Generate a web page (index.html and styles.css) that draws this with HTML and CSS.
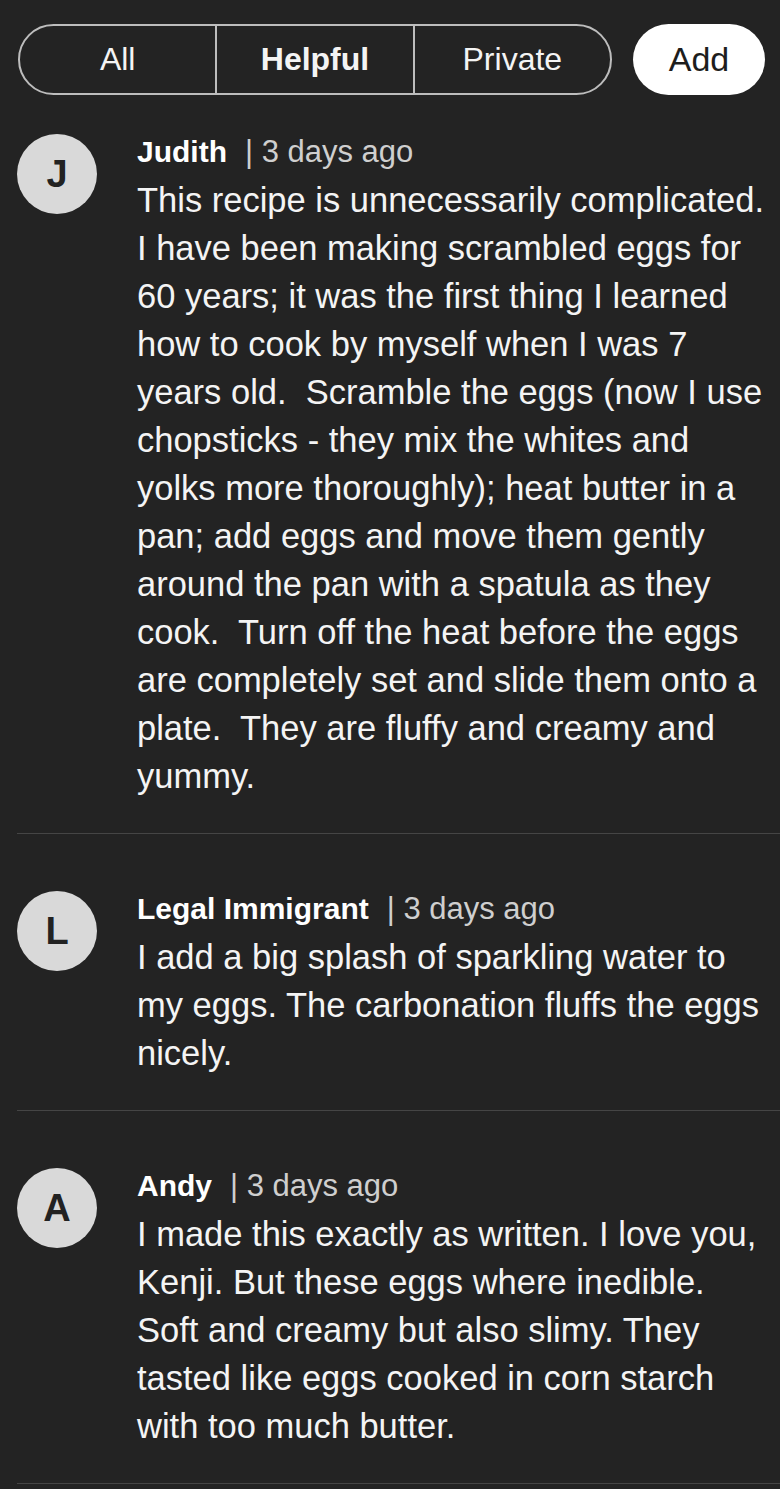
FILE: index.html
```html
<!DOCTYPE html>
<html lang="en">
<head>
<meta charset="utf-8">
<title>Comments</title>
<link rel="stylesheet" href="styles.css">
</head>
<body>
<div class="page">
  <div class="toolbar">
    <div class="segmented">
      <button class="seg">All</button>
      <button class="seg seg-active">Helpful</button>
      <button class="seg">Private</button>
    </div>
    <button class="add">Add</button>
  </div>

  <div class="comment">
    <div class="avatar">J</div>
    <div class="content">
      <div class="meta"><span class="name">Judith</span><span class="time">| 3 days ago</span></div>
      <p class="body">This recipe is unnecessarily complicated.<br>I have been making scrambled eggs for<br>60 years; it was the first thing I learned<br>how to cook by myself when I was 7<br>years old.&nbsp; Scramble the eggs (now I use<br>chopsticks - they mix the whites and<br>yolks more thoroughly); heat butter in a<br>pan; add eggs and move them gently<br>around the pan with a spatula as they<br>cook.&nbsp; Turn off the heat before the eggs<br>are completely set and slide them onto a<br>plate.&nbsp; They are fluffy and creamy and<br>yummy.</p>
    </div>
  </div>

  <div class="comment">
    <div class="avatar">L</div>
    <div class="content">
      <div class="meta"><span class="name">Legal Immigrant</span><span class="time">| 3 days ago</span></div>
      <p class="body">I add a big splash of sparkling water to<br>my eggs. The carbonation fluffs the eggs<br>nicely.</p>
    </div>
  </div>

  <div class="comment">
    <div class="avatar">A</div>
    <div class="content">
      <div class="meta"><span class="name">Andy</span><span class="time">| 3 days ago</span></div>
      <p class="body">I made this exactly as written. I love you,<br>Kenji. But these eggs where inedible.<br>Soft and creamy but also slimy. They<br>tasted like eggs cooked in corn starch<br>with too much butter.</p>
    </div>
  </div>
</div>
</body>
</html>
```

FILE: styles.css
```css
* { box-sizing: border-box; }

html, body {
  margin: 0;
  padding: 0;
  background: #232323;
}

body {
  font-family: "Liberation Sans", Arial, sans-serif;
  color: #f4f4f4;
}

.page {
  padding-left: 17px;
}

.toolbar {
  display: flex;
  align-items: center;
  gap: 21px;
  padding: 23px 15px 0 1px;
  height: 95px;
}

.segmented {
  flex: 1;
  display: flex;
  height: 71px;
  border: 2px solid #bdbdbd;
  border-radius: 36px;
  overflow: hidden;
}

.seg {
  flex: 1;
  background: transparent;
  border: none;
  border-left: 2px solid #bdbdbd;
  color: #f4f4f4;
  font-family: inherit;
  font-size: 32px;
  padding: 0;
}

.seg:first-child { border-left: none; }

.seg-active { font-weight: bold; }

.add {
  width: 132px;
  height: 71px;
  border: none;
  border-radius: 36px;
  background: #ffffff;
  color: #1d1d1d;
  font-family: inherit;
  font-size: 34px;
  padding: 0;
}

.comment {
  display: flex;
  gap: 40px;
  padding: 33px 0 33px 0;
  border-bottom: 1px solid #454545;
}

.comment + .comment {
  padding-top: 51px;
}

.avatar {
  flex: none;
  width: 80px;
  height: 80px;
  margin-top: 6px;
  border-radius: 50%;
  background: #d9d9d9;
  color: #222222;
  font-size: 38px;
  font-weight: bold;
  display: flex;
  align-items: center;
  justify-content: center;
}

.content {
  flex: 1;
  min-width: 0;
}

.meta {
  height: 48px;
  line-height: 48px;
  font-size: 30px;
  white-space: nowrap;
}

.name {
  font-weight: bold;
  color: #ffffff;
  margin-right: 18px;
}

.time {
  color: #cfcfcf;
  font-size: 31px;
}

.body {
  margin: 0;
  font-size: 34.5px;
  line-height: 48px;
}
```
